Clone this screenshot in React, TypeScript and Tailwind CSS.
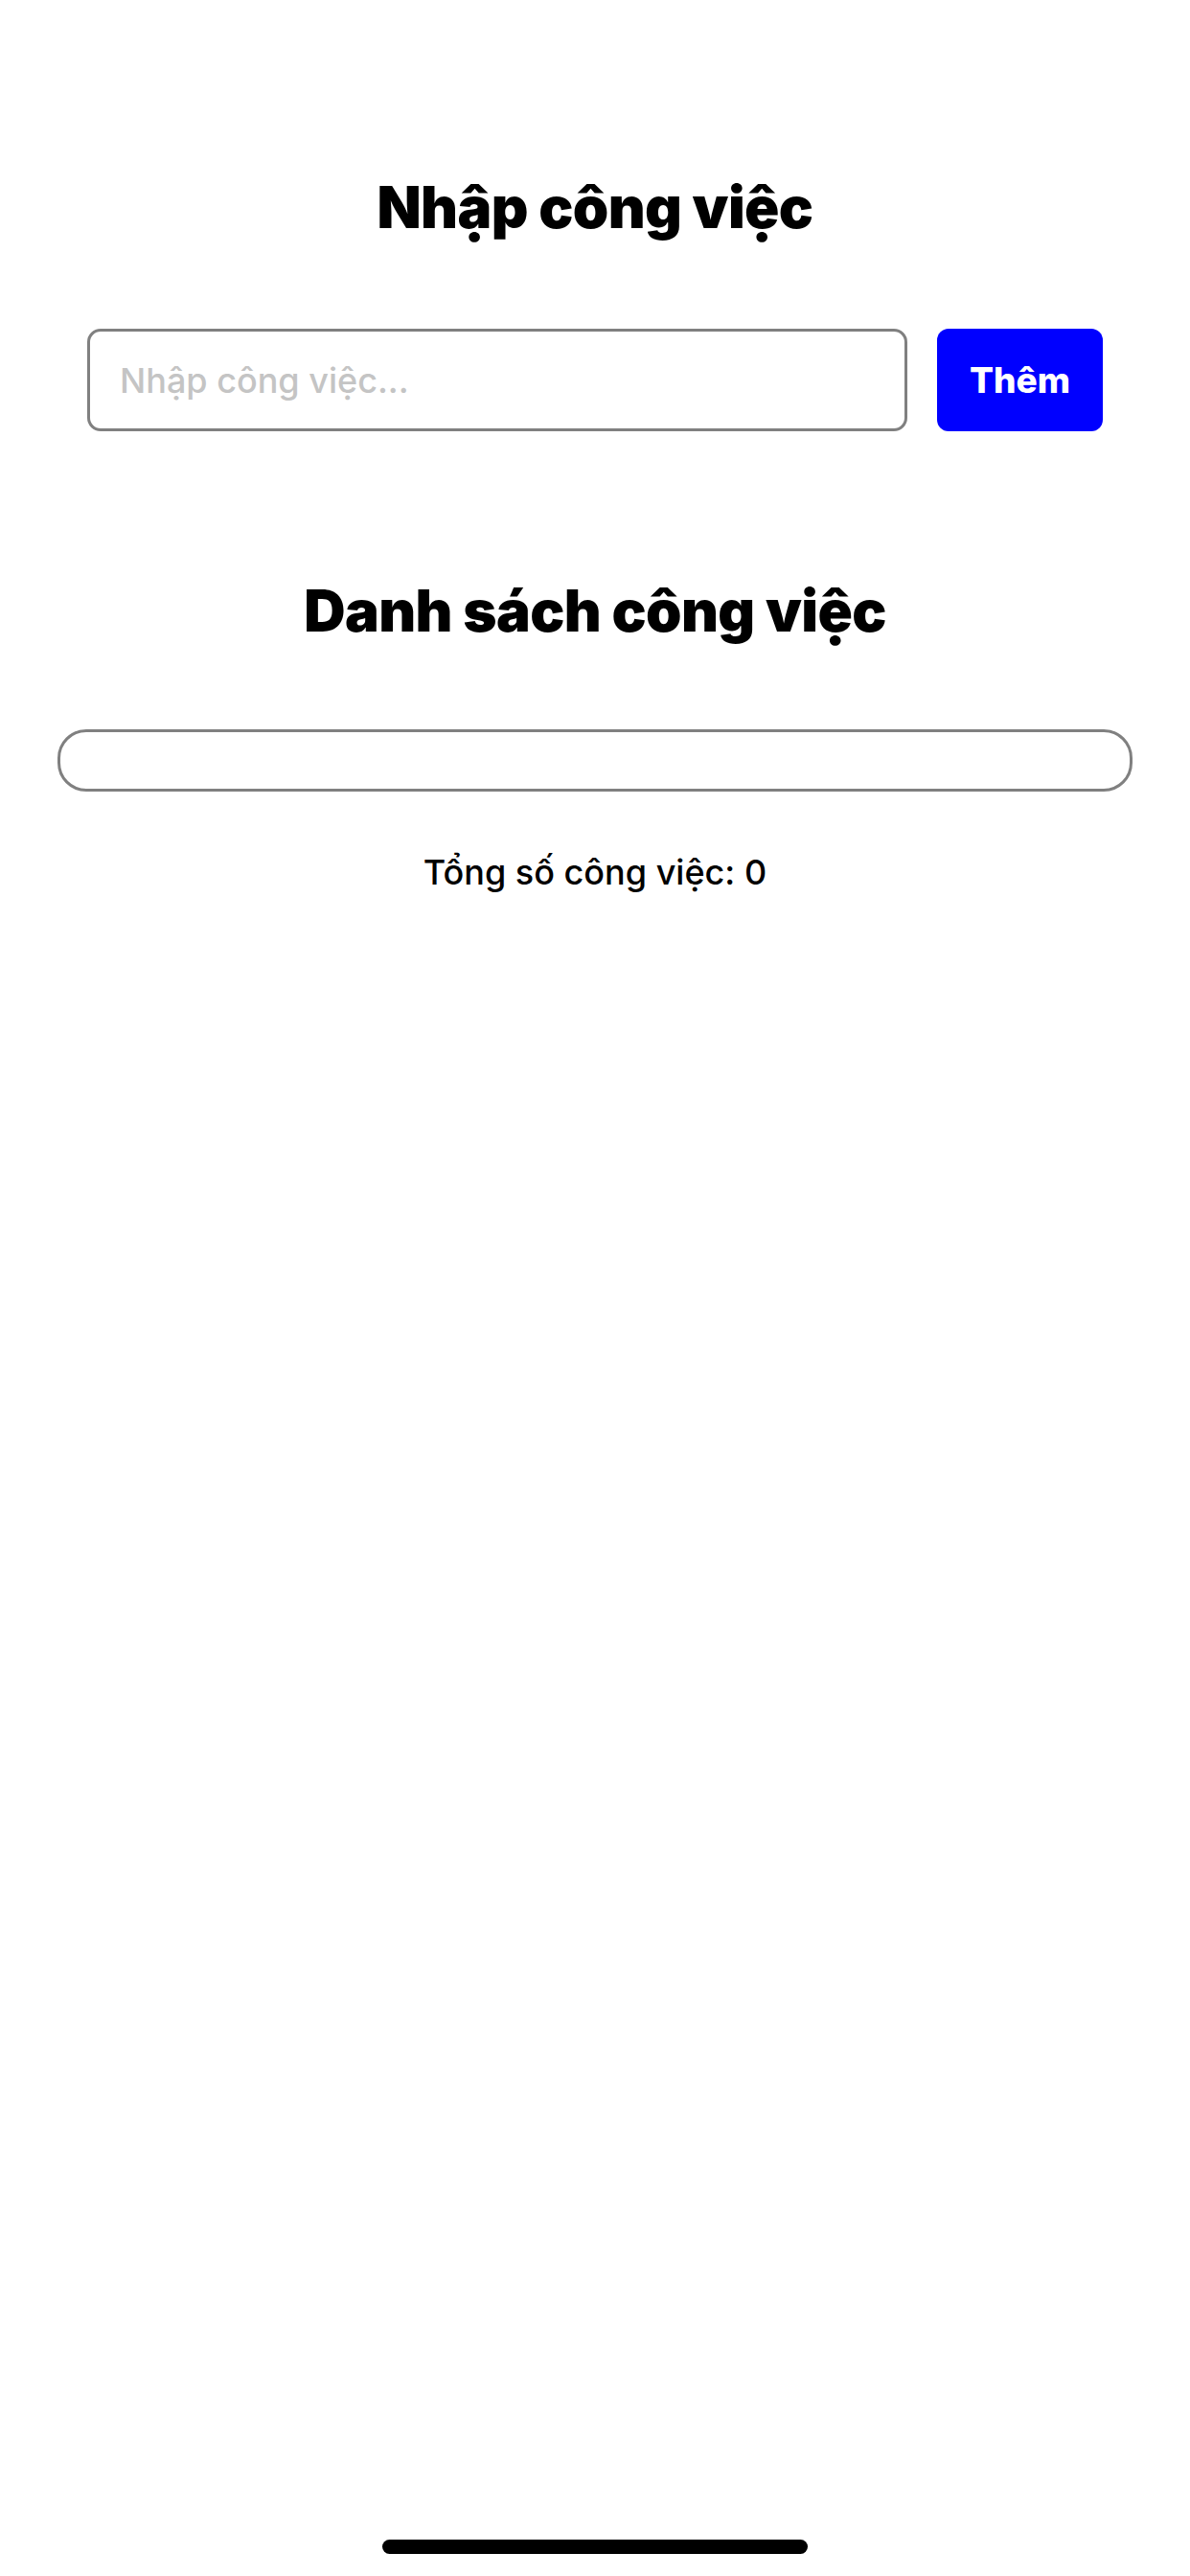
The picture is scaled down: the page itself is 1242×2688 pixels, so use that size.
import { useState } from "react";

export default function App() {
  const [tasks, setTasks] = useState<string[]>([]);
  const [value, setValue] = useState("");

  const addTask = () => {
    const text = value.trim();
    if (!text) return;
    setTasks([...tasks, text]);
    setValue("");
  };

  return (
    <div className="flex h-[2688px] w-full flex-col bg-white font-['Inter','Noto_Sans',sans-serif] text-black">
      <div className="flex flex-col items-center pt-[181px]">
        <h1 className="text-[60px] font-black leading-[70px] tracking-[-0.6px]">Nhập công việc</h1>

        <div className="mt-[92px] flex w-full gap-[31px] px-[91px]">
          <input
            value={value}
            onChange={(e) => setValue(e.target.value)}
            placeholder="Nhập công việc..."
            className="h-[107px] flex-1 rounded-[14px] border-[3px] border-[#808080] px-[31px] text-[36px] font-medium text-black outline-none placeholder:text-[#c4c4c4]"
          />
          <button
            onClick={addTask}
            className="h-[107px] w-[173px] rounded-[12px] bg-[#0000ff] text-[37px] font-extrabold text-white"
          >
            Thêm
          </button>
        </div>

        <h2 className="mt-[152px] text-[60px] font-black leading-[70px] tracking-[-0.6px]">Danh sách công việc</h2>

        <div className="mt-[89px] w-full px-[60px]">
          <ul className="min-h-[65px] rounded-[30px] border-[3px] border-[#808080] px-[30px]">
            {tasks.map((task, i) => (
              <li key={i} className="py-4 text-[34px]">
                {task}
              </li>
            ))}
          </ul>
        </div>

        <p className="mt-[63px] text-[36px] font-medium leading-[43px]">Tổng số công việc: {tasks.length}</p>
      </div>

      <div className="mt-auto mb-[23px] flex justify-center">
        <div className="h-[15px] w-[444px] rounded-full bg-black" />
      </div>
    </div>
  );
}
